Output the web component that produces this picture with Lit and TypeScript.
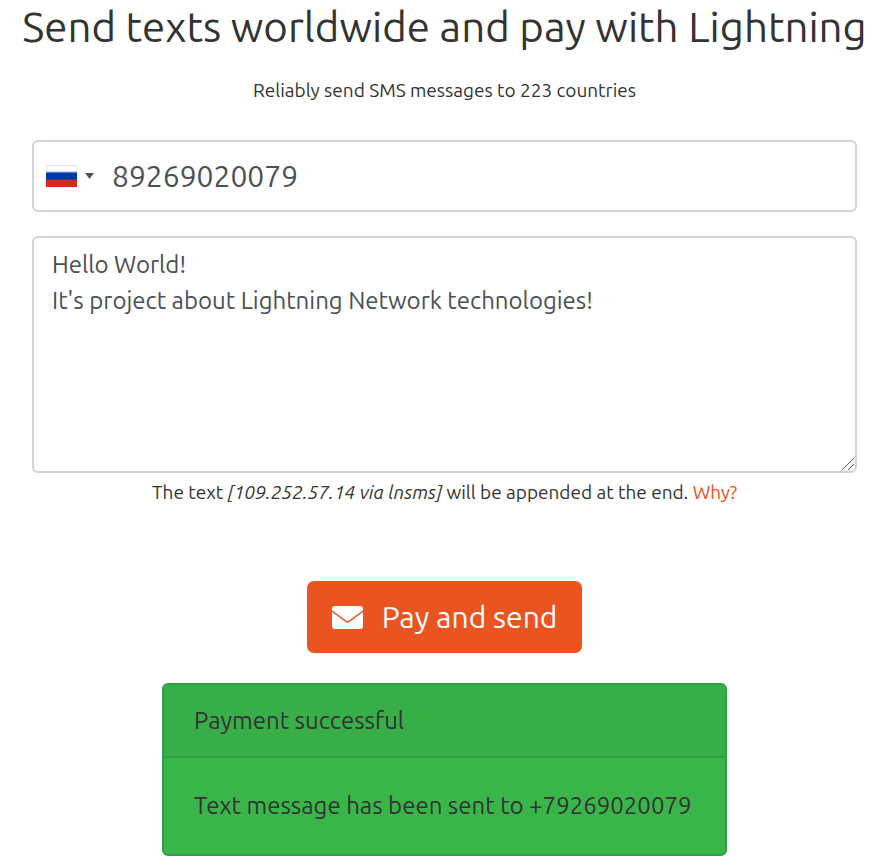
import { LitElement, html, css, svg } from "lit";
import { customElement, state } from "lit/decorators.js";

const envelope = svg`
  <path d="M3 0H28Q31 0 31 3V4.200L17 14.600Q15.500 15.700 14 14.600L0 4.200V3Q0 0 3 0Z" />
  <path d="M0 6L13.500 16Q15.500 17.400 17.500 16L31 6V20Q31 23 28 23H3Q0 23 0 20Z" />
`;

@customElement("app-root")
export class AppRoot extends LitElement {
  @state() private phone = "89269020079";
  @state() private message =
    "Hello World!\nIt's project about Lightning Network technologies!";

  static styles = css`
    :host {
      display: block;
      padding-right: 4px;
      background: #fff;
      color: #333;
      font-family: Ubuntu, "Noto Sans", sans-serif;
      font-size: 24px;
      line-height: 36px;
    }
    * {
      box-sizing: border-box;
    }
    h1 {
      margin: 0;
      font-size: 42px;
      font-weight: 400;
      line-height: 54px;
      text-align: center;
      white-space: nowrap;
    }
    .small {
      margin: 0;
      font-size: 19px;
      line-height: 28px;
      text-align: center;
    }
    .lead {
      margin-top: 22px;
    }
    form {
      display: flex;
      flex-direction: column;
      margin: 36px 32px 0;
    }
    .phone {
      display: flex;
      align-items: center;
      height: 72px;
      border: 2px solid #ced4da;
      border-radius: 6px;
    }
    .country {
      display: flex;
      align-items: center;
      gap: 8px;
      height: 100%;
      padding: 0 12px;
      border: 0;
      background: none;
    }
    .flag {
      width: 31px;
      height: 22px;
    }
    .arrow {
      width: 9px;
      height: 6px;
      fill: #555;
    }
    .number,
    .message {
      width: 100%;
      background: none;
      color: #495057;
      font-family: inherit;
      outline: 0;
    }
    .number {
      flex: 1;
      min-width: 0;
      height: 100%;
      padding: 0 18px 0 6px;
      border: 0;
      font-size: 30px;
    }
    .area {
      position: relative;
      display: flex;
      margin-top: 24px;
    }
    .message {
      height: 237px;
      padding: 9px 18px;
      border: 2px solid #ced4da;
      border-radius: 6px;
      font-size: 24px;
      line-height: 36px;
      resize: none;
    }
    .grip {
      position: absolute;
      right: 3px;
      bottom: 3px;
      width: 12px;
      height: 12px;
      stroke: #555;
      pointer-events: none;
    }
    .note {
      margin-top: 5px;
    }
    a {
      color: #e95420;
      text-decoration: none;
    }
    .send {
      display: flex;
      align-items: center;
      align-self: center;
      gap: 19px;
      height: 72px;
      margin-top: 75px;
      padding: 0 25px;
      border: 0;
      border-radius: 7px;
      background: #e95420;
      color: #fff;
      font-family: inherit;
      font-size: 30px;
    }
    .envelope {
      width: 31px;
      height: 23px;
      fill: currentColor;
    }
    .card {
      max-width: 565px;
      margin: 30px auto 0;
      border: 2px solid #309f3f;
      border-radius: 6px;
      background: #3ab54a;
    }
    .card h2,
    .card p {
      margin: 0;
      font-size: 24px;
      font-weight: 400;
    }
    .card h2 {
      padding: 18px 30px 17px;
      border-bottom: 2px solid #309f3f;
      background: #37ae47;
    }
    .card p {
      padding: 30px;
    }
  `;

  render() {
    return html`
      <main>
        <h1>Send texts worldwide and pay with Lightning</h1>
        <p class="small lead">Reliably send SMS messages to 223 countries</p>
        <form @submit=${(e: Event) => e.preventDefault()}>
          <div class="phone">
            <button class="country" type="button" aria-label="Country: Russia">
              <svg class="flag" viewBox="0 0 31 22" aria-hidden="true">
                <rect width="31" height="22" fill="#e4e4e4" />
                <rect x="1" y="1" width="29" height="6" fill="#fff" />
                <rect y="6" width="31" height="1" fill="#c9d5ee" />
                <rect y="7" width="31" height="1" fill="#5f80c8" />
                <rect y="8" width="31" height="7" fill="#0039a6" />
                <rect y="14" width="31" height="1" fill="#4a3580" />
                <rect y="15" width="31" height="7" fill="#d52b1e" />
              </svg>
              <svg class="arrow" viewBox="0 0 9 6" aria-hidden="true">
                <path d="M0 0H9L4.500 6Z" />
              </svg>
            </button>
            <input
              class="number"
              type="tel"
              aria-label="Phone number"
              .value=${this.phone}
              @input=${(e: Event) =>
                (this.phone = (e.target as HTMLInputElement).value)}
            />
          </div>
          <div class="area">
            <textarea
              class="message"
              aria-label="Message"
              spellcheck="false"
              .value=${this.message}
              @input=${(e: Event) =>
                (this.message = (e.target as HTMLTextAreaElement).value)}
            ></textarea>
            <svg class="grip" viewBox="0 0 12 12" aria-hidden="true">
              <path d="M0 12L12 0M6 12L12 6" />
            </svg>
          </div>
          <p class="small note">
            The text <em>[109.252.57.14 via lnsms]</em> will be appended at the
            end. <a href="#why">Why?</a>
          </p>
          <button class="send" type="submit">
            <svg class="envelope" viewBox="0 0 31 23" aria-hidden="true">
              ${envelope}
            </svg>
            Pay and send
          </button>
        </form>
        <section class="card" role="status">
          <h2>Payment successful</h2>
          <p>Text message has been sent to +79269020079</p>
        </section>
      </main>
    `;
  }
}
